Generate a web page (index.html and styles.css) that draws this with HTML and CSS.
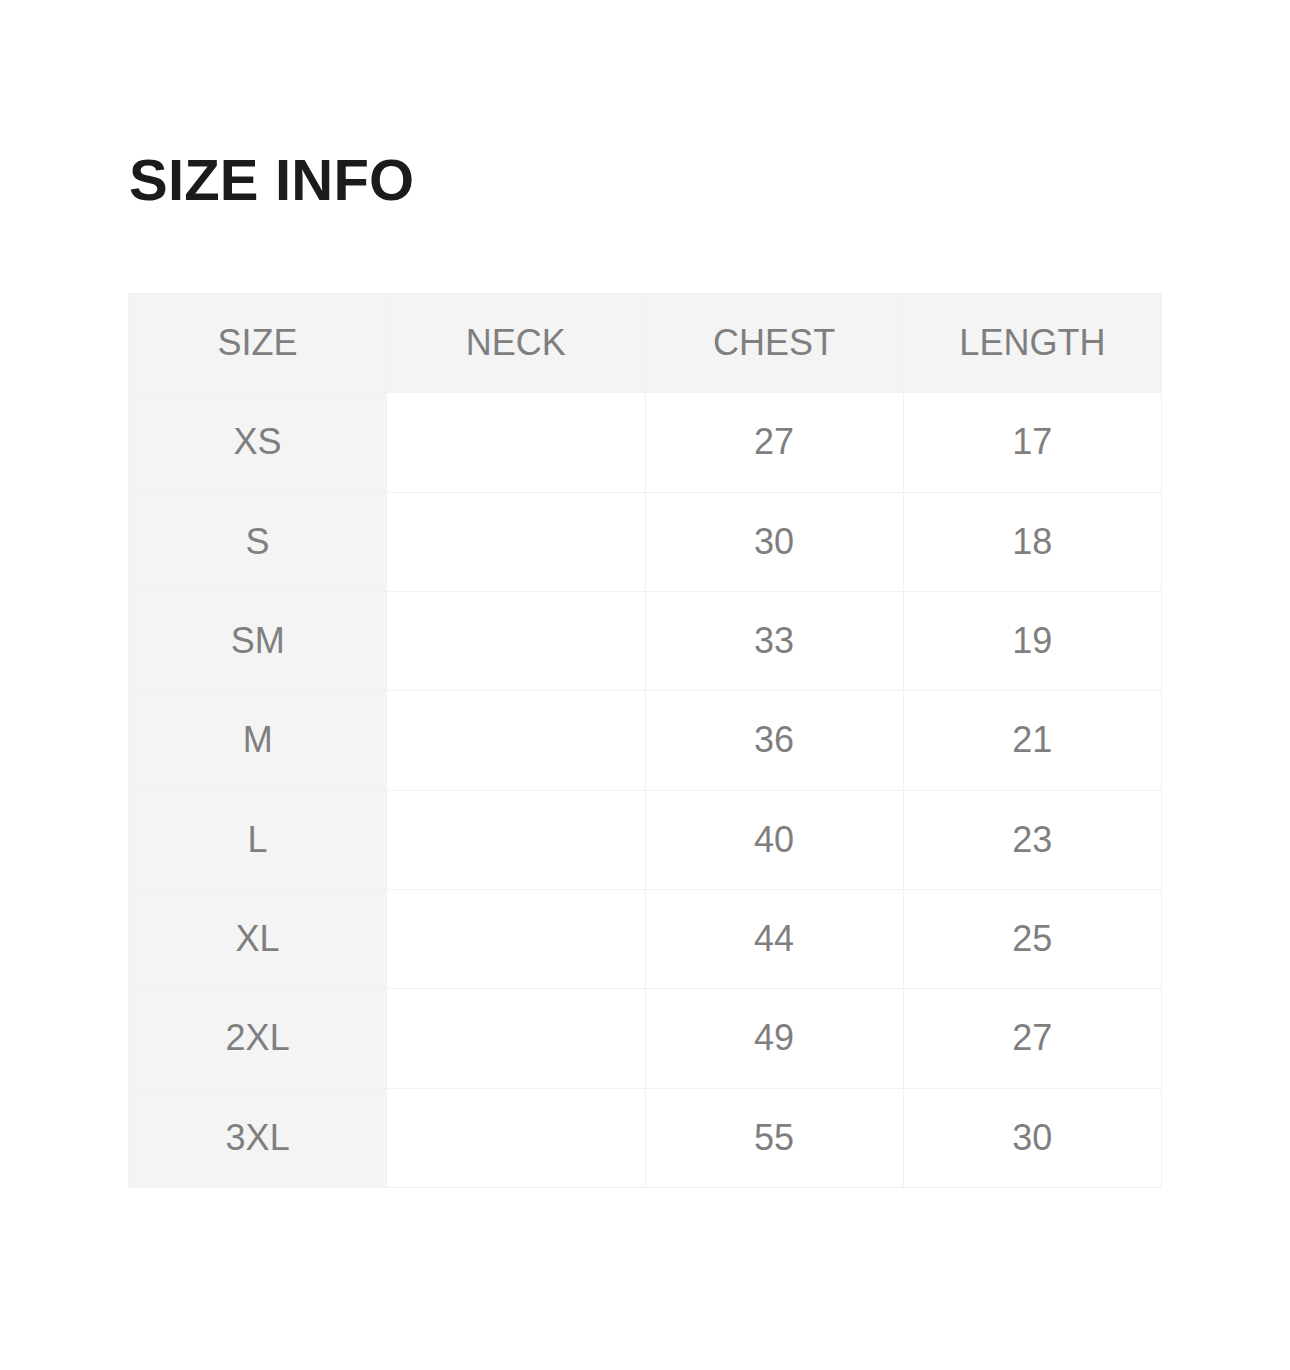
FILE: index.html
```html
<!DOCTYPE html>
<html>
<head>
<meta charset="utf-8">
<link rel="stylesheet" href="styles.css">
</head>
<body>
<main class="page">
  <h1 class="title">SIZE INFO</h1>
  <table class="size-table">
    <thead>
      <tr><th>SIZE</th><th>NECK</th><th>CHEST</th><th>LENGTH</th></tr>
    </thead>
    <tbody>
      <tr><th>XS</th><td></td><td>27</td><td>17</td></tr>
      <tr><th>S</th><td></td><td>30</td><td>18</td></tr>
      <tr><th>SM</th><td></td><td>33</td><td>19</td></tr>
      <tr><th>M</th><td></td><td>36</td><td>21</td></tr>
      <tr><th>L</th><td></td><td>40</td><td>23</td></tr>
      <tr><th>XL</th><td></td><td>44</td><td>25</td></tr>
      <tr><th>2XL</th><td></td><td>49</td><td>27</td></tr>
      <tr><th>3XL</th><td></td><td>55</td><td>30</td></tr>
    </tbody>
  </table>
</main>
</body>
</html>
```
FILE: styles.css
```css
html, body {
  margin: 0;
  padding: 0;
  background: #ffffff;
}
body {
  font-family: "Liberation Sans", Arial, sans-serif;
}
.page {
  padding: 151px 0 0 128px;
}
.title {
  margin: 0 0 0 1px;
  font-size: 58px;
  line-height: 58px;
  font-weight: 700;
  color: #1b1b1b;
  letter-spacing: 0.2px;
}
.size-table {
  margin-top: 84px;
  width: 1034px;
  border-collapse: collapse;
  table-layout: fixed;
}
.size-table th,
.size-table td {
  height: 98.33px;
  padding: 0;
  border: 1px solid #f1f1f1;
  text-align: center;
  vertical-align: middle;
  font-size: 36px;
  font-weight: 400;
  color: #7f7f7f;
  background: #ffffff;
}
.size-table thead th,
.size-table tbody th {
  background: #f4f4f4;
}
```
